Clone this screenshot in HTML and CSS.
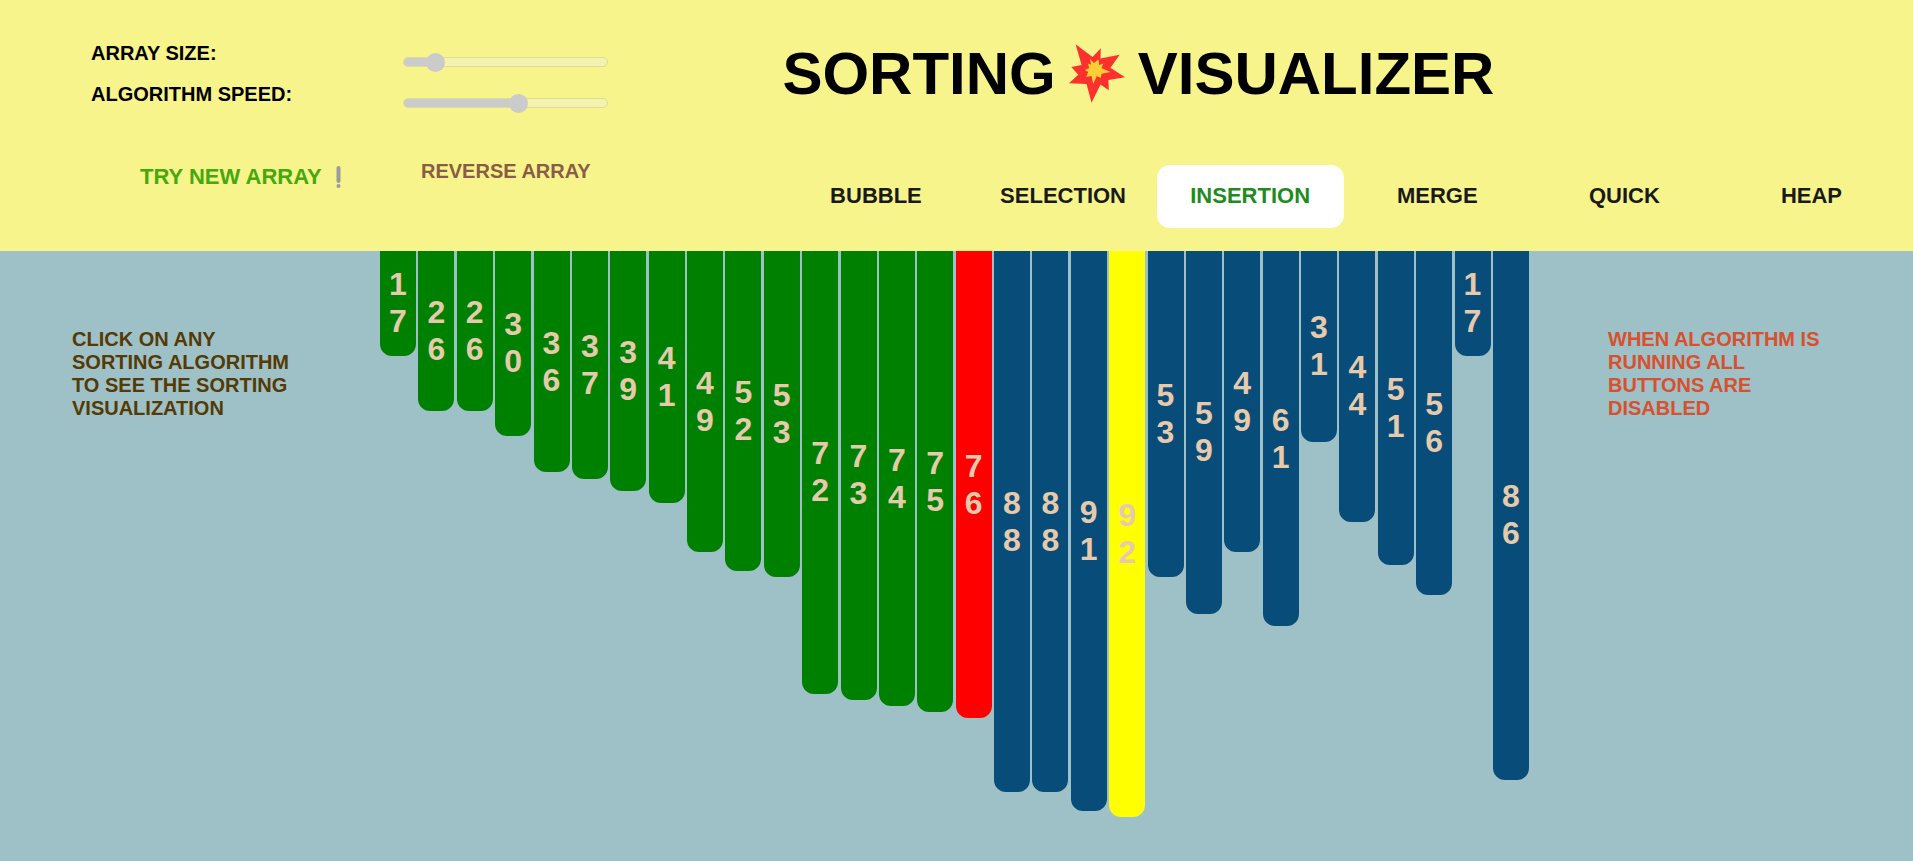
FILE: index.html
```
<!DOCTYPE html>
<html lang="en">
<head>
<meta charset="utf-8">
<meta name="viewport" content="width=device-width, initial-scale=1">
<title>Sorting Visualizer</title>
<link rel="stylesheet" href="styles.css">
</head>
<body>
<header class="header">
  <section class="controls">
    <div class="sliders">
      <label for="size">ARRAY SIZE:</label>
      <input class="range range-size" id="size" type="range" min="0" max="100" value="12" disabled>
      <label for="speed">ALGORITHM SPEED:</label>
      <input class="range range-speed" id="speed" type="range" min="0" max="100" value="57" disabled>
    </div>
    <div class="actions">
      <button class="new-array" type="button" disabled>TRY NEW ARRAY
        <svg class="mark" viewBox="0 0 5 22" aria-hidden="true"><rect x="0.5" y="0" width="4" height="17" rx="2"/><circle cx="2.5" cy="20" r="2"/></svg>
      </button>
      <button class="reverse-array" type="button" disabled>REVERSE ARRAY</button>
    </div>
  </section>
  <section class="main">
    <h1 class="title">
      <span>SORTING</span>
      <svg class="burst" viewBox="87 40 169 177" aria-hidden="true">
        <path fill="#fc312e" d="M107 40L158 79L183 52L182 83L240 72L212 111L256 140L206 148L207 179L182 162L155 217L140 160L87 158L115 132L94 109L125 103Z"/>
        <path fill="#ffcf35" d="M150 84L162 97L176 86L178 103L191 98L185 112L212 124L185 129L183 142L171 136L160 160L155 136L139 139L145 124L135 118L148 112L144 98L154 102Z"/>
      </svg>
      <span>VISUALIZER</span>
    </h1>
    <nav class="algorithms" aria-label="Sorting algorithms">
      <button type="button" disabled>BUBBLE</button>
      <button type="button" disabled>SELECTION</button>
      <button class="active" type="button" disabled>INSERTION</button>
      <button type="button" disabled>MERGE</button>
      <button type="button" disabled>QUICK</button>
      <button type="button" disabled>HEAP</button>
    </nav>
  </section>
</header>
<main class="stage">
  <p class="note note-hint">CLICK ON ANY SORTING ALGORITHM TO SEE THE SORTING VISUALIZATION</p>
  <div class="bars">
    <div class="bar sorted" style="--value:17">17</div>
    <div class="bar sorted" style="--value:26">26</div>
    <div class="bar sorted" style="--value:26">26</div>
    <div class="bar sorted" style="--value:30">30</div>
    <div class="bar sorted" style="--value:36">36</div>
    <div class="bar sorted" style="--value:37">37</div>
    <div class="bar sorted" style="--value:39">39</div>
    <div class="bar sorted" style="--value:41">41</div>
    <div class="bar sorted" style="--value:49">49</div>
    <div class="bar sorted" style="--value:52">52</div>
    <div class="bar sorted" style="--value:53">53</div>
    <div class="bar sorted" style="--value:72">72</div>
    <div class="bar sorted" style="--value:73">73</div>
    <div class="bar sorted" style="--value:74">74</div>
    <div class="bar sorted" style="--value:75">75</div>
    <div class="bar compared" style="--value:76">76</div>
    <div class="bar" style="--value:88">88</div>
    <div class="bar" style="--value:88">88</div>
    <div class="bar" style="--value:91">91</div>
    <div class="bar current" style="--value:92">92</div>
    <div class="bar" style="--value:53">53</div>
    <div class="bar" style="--value:59">59</div>
    <div class="bar" style="--value:49">49</div>
    <div class="bar" style="--value:61">61</div>
    <div class="bar" style="--value:31">31</div>
    <div class="bar" style="--value:44">44</div>
    <div class="bar" style="--value:51">51</div>
    <div class="bar" style="--value:56">56</div>
    <div class="bar" style="--value:17">17</div>
    <div class="bar" style="--value:86">86</div>
  </div>
  <p class="note note-warning">WHEN ALGORITHM IS RUNNING ALL BUTTONS ARE DISABLED</p>
</main>
</body>
</html>
```
FILE: styles.css
```
* {
  box-sizing: border-box;
}

body {
  margin: 0;
  min-height: 100vh;
  background: #9ec0c7;
  font-family: "Liberation Sans", Arial, sans-serif;
  font-size: 20px;
  line-height: 23px;
  font-weight: bold;
}

button {
  border: 0;
  padding: 0;
  background: none;
  font: inherit;
}

.header {
  display: grid;
  grid-template-columns: 409fr 591fr;
  background: #f7f48b;
}

.controls {
  padding-top: 42px;
}

.sliders {
  display: grid;
  grid-template-columns: 312px 205px;
  grid-auto-rows: 41px;
  align-items: start;
  padding-left: 91px;
  color: #000;
}

.range {
  appearance: none;
  width: 100%;
  height: 19px;
  margin: 10px 0 0;
  background: none;
}

.range::-webkit-slider-runnable-track {
  height: 10px;
  border: 1px solid #dedb9c;
  border-radius: 5px;
  background: linear-gradient(to right, #cbcbcb var(--fill), #f4f2ae var(--fill));
}

.range-size {
  --fill: 16%;
}

.range-speed {
  --fill: 57%;
}

.range::-webkit-slider-thumb {
  appearance: none;
  width: 19px;
  height: 19px;
  margin-top: -5px;
  border-radius: 50%;
  background: #cbcbcb;
}

.actions {
  display: grid;
  grid-template-columns: 281px auto;
  justify-content: start;
  align-items: start;
  padding: 36px 0 0 140px;
}

.new-array {
  display: flex;
  align-items: center;
  gap: 14px;
  padding-top: 4px;
  color: #46a80e;
  font-size: 22px;
  line-height: 26px;
}

.mark {
  width: 5px;
  height: 22px;
  fill: #9b9b9b;
}

.reverse-array {
  color: #8a5c47;
}

.main {
  padding: 39px 8px 23px 0;
}

.title {
  display: flex;
  align-items: center;
  margin: 0;
  color: #000;
  font-size: 60px;
  line-height: 69px;
}

.burst {
  width: 56px;
  height: 59px;
  margin: 0 13px;
}

.algorithms {
  display: grid;
  grid-template-columns: repeat(6, 1fr);
  margin-top: 57px;
}

.algorithms button {
  padding: 18px 0 19px;
  border-radius: 13px;
  color: #1a1a1a;
  font-size: 22px;
  line-height: 26px;
}

.algorithms .active {
  background: #fff;
  color: #228b1e;
}

.stage {
  display: grid;
  grid-template-columns: 380px 1fr 384px;
  align-items: start;
}

.note {
  margin: 77px 0 0;
}

.note-hint {
  padding: 0 80px 0 72px;
  color: #543a04;
}

.note-warning {
  padding: 0 80px 0 79px;
  color: #d8502c;
}

.bars {
  display: flex;
  align-items: flex-start;
  justify-content: space-between;
}

.bar {
  display: flex;
  flex: 0 1 36px;
  flex-direction: column;
  justify-content: center;
  height: calc(var(--value) * 100vh / 140);
  padding: 0 9px;
  border-radius: 0 0 12px 12px;
  background: #084c79;
  color: #e6caac;
  font-size: 32px;
  line-height: 37px;
  overflow-wrap: anywhere;
}

.sorted {
  background: #008000;
}

.compared {
  background: #f00;
}

.current {
  background: #ff0;
}
```
